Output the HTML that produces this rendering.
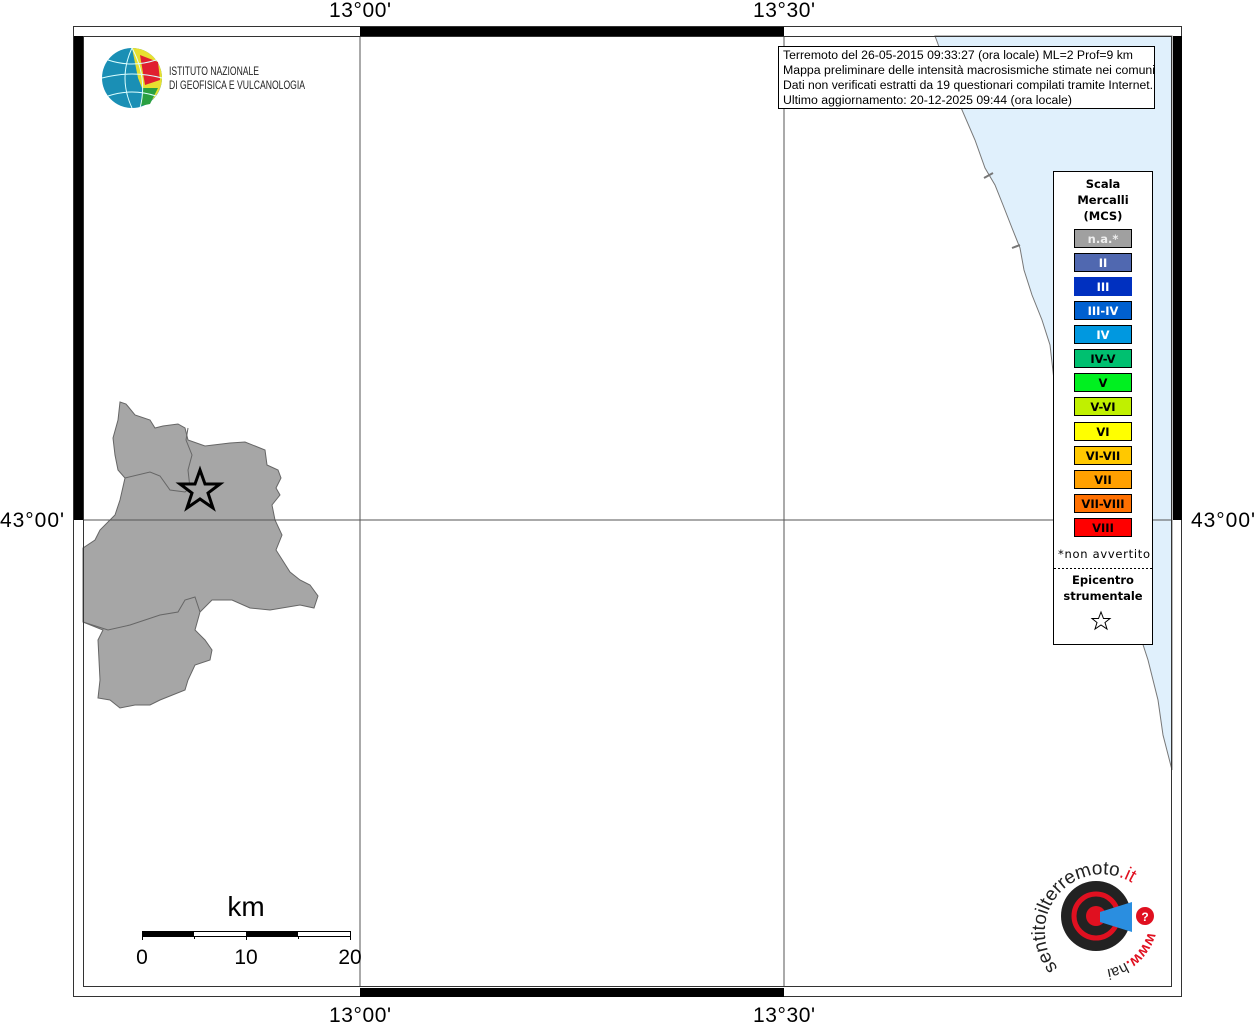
<!DOCTYPE html>
<html><head><meta charset="utf-8"><style>
html,body{margin:0;padding:0;background:#fff;width:1255px;height:1024px;overflow:hidden}
svg{display:block}
text{font-family:"Liberation Sans",sans-serif}
text.lg,.lg text{font-family:"DejaVu Sans",sans-serif;font-weight:bold;font-size:11.5px}
</style></head><body>
<svg width="1255" height="1024" viewBox="0 0 1255 1024" xmlns="http://www.w3.org/2000/svg">
<path d="M935,36 L955,90 L962,110 L975,140 L985,168 L995,185 L1003,205 L1012,228 L1020,248 L1024,270 L1032,295 L1042,320 L1050,345 L1054,380 L1060,420 L1075,470 L1090,510 L1110,560 L1135,620 L1148,660 L1158,700 L1163,735 L1172,770 L1172,36 Z" fill="#e0f0fc" stroke="#777" stroke-width="1"/>
<path d="M984,178 L993,173 M1012,248 L1020,245" stroke="#777" stroke-width="2" fill="none"/>
<path d="M120,402 L126,404 L135,415 L150,420 L155,428 L163,426 L178,424 L185,428 L188,440 L205,446 L230,443 L245,442 L265,450 L267,465 L278,470 L281,478 L276,488 L280,495 L272,505 L275,520 L282,535 L276,550 L290,572 L300,580 L310,585 L318,596 L314,608 L300,605 L270,610 L250,608 L232,600 L212,600 L200,612 L195,630 L205,640 L212,650 L210,660 L195,665 L188,680 L185,690 L160,700 L150,705 L135,705 L120,708 L110,700 L98,698 L100,680 L98,640 L103,630 L83,622 L83,548 L95,540 L100,530 L115,515 L120,500 L125,478 L118,470 L115,455 L113,438 L118,420 Z" fill="#a6a6a6" stroke="#666" stroke-width="1"/>
<path d="M125,478 L150,472 L160,476 L170,490 L185,492 L190,488 L188,470 L192,455 L186,440 L188,428 M83,622 L108,630 L130,625 L160,615 L178,612 L185,600 L195,597 L200,612" fill="none" stroke="#666" stroke-width="1"/>
<line x1="360" y1="36" x2="360" y2="987" stroke="#555" stroke-width="1"/>
<line x1="784" y1="36" x2="784" y2="987" stroke="#555" stroke-width="1"/>
<line x1="83" y1="520" x2="1172" y2="520" stroke="#555" stroke-width="1"/>
<rect x="73.5" y="26.5" width="1108" height="970" fill="none" stroke="#333" stroke-width="1"/>
<rect x="83.5" y="36.5" width="1088" height="950" fill="none" stroke="#333" stroke-width="1"/>
<rect x="360" y="27" width="424" height="9" fill="#000"/>
<rect x="360" y="988" width="424" height="9" fill="#000"/>
<rect x="74" y="36" width="9" height="484" fill="#000"/>
<rect x="1173" y="36" width="9" height="484" fill="#000"/>
<text x="360" y="17" font-size="21" text-anchor="middle" textLength="62">13°00'</text>
<text x="784" y="17" font-size="21" text-anchor="middle" textLength="62">13°30'</text>
<text x="360" y="1022" font-size="21" text-anchor="middle" textLength="62">13°00'</text>
<text x="784" y="1022" font-size="21" text-anchor="middle" textLength="62">13°30'</text>
<text x="0" y="527" font-size="21" textLength="64">43°00'</text>
<text x="1191" y="527" font-size="21" textLength="64">43°00'</text>
<polygon points="200,470 205,484 220,484 208,493 213,508 200,499 187,508 192,493 180,484 195,484" fill="#a6a6a6" stroke="#000" stroke-width="3"/>
<circle cx="132" cy="78" r="30" fill="#1a8fb5"/>
<path d="M132,48 A30,30 0 0 1 162,78 A30,30 0 0 1 148,103 L138,78 Z" fill="#e8e030"/>
<path d="M140,55 L158,62 L160,80 L145,85 Z" fill="#e02030"/>
<path d="M143,88 L158,88 L150,104 L140,106 Z" fill="#2aa040"/>
<path d="M102,78 Q132,70 162,78 M132,48 Q118,78 132,108 M132,48 Q148,78 140,108 M108,60 Q132,68 156,60 M108,96 Q132,88 156,96" stroke="#dff" stroke-width="1" fill="none"/>
<text x="169" y="75" font-size="12" fill="#222" textLength="90" lengthAdjust="spacingAndGlyphs">ISTITUTO NAZIONALE</text>
<text x="169" y="89" font-size="12" fill="#222" textLength="136" lengthAdjust="spacingAndGlyphs">DI GEOFISICA E VULCANOLOGIA</text>
<rect x="778.5" y="46.5" width="376" height="62" fill="#fff" stroke="#000"/>
<text font-size="11.5" x="783" y="59" textLength="350" lengthAdjust="spacingAndGlyphs">Terremoto del 26-05-2015 09:33:27 (ora locale) ML=2 Prof=9 km</text>
<text font-size="11.5" x="783" y="74" textLength="372" lengthAdjust="spacingAndGlyphs">Mappa preliminare delle intensità macrosismiche stimate nei comuni</text>
<text font-size="11.5" x="783" y="89" textLength="370" lengthAdjust="spacingAndGlyphs">Dati non verificati estratti da 19 questionari compilati tramite Internet.</text>
<text font-size="11.5" x="783" y="104" textLength="289" lengthAdjust="spacingAndGlyphs">Ultimo aggiornamento: 20-12-2025 09:44 (ora locale)</text>
<rect x="1053.5" y="171.5" width="99" height="473" fill="#fff" stroke="#000"/>
<text class="lg" x="1103" y="188" text-anchor="middle">Scala</text>
<text class="lg" x="1103" y="204" text-anchor="middle">Mercalli</text>
<text class="lg" x="1103" y="220" text-anchor="middle">(MCS)</text>
<g stroke="#000" stroke-width="1">
<rect x="1074.5" y="229.5" width="57" height="18" fill="#a0a0a0"/>
<rect x="1074.5" y="253.5" width="57" height="18" fill="#5068b0"/>
<rect x="1074.5" y="277.5" width="57" height="18" fill="#0030c0" stroke="#0030c0"/>
<rect x="1074.5" y="301.5" width="57" height="18" fill="#0060d0"/>
<rect x="1074.5" y="325.5" width="57" height="18" fill="#0098e0"/>
<rect x="1074.5" y="349.5" width="57" height="18" fill="#00c070"/>
<rect x="1074.5" y="373.5" width="57" height="18" fill="#00f020"/>
<rect x="1074.5" y="397.5" width="57" height="18" fill="#c0f000"/>
<rect x="1074.5" y="422.5" width="57" height="18" fill="#ffff00"/>
<rect x="1074.5" y="446.5" width="57" height="18" fill="#ffc800"/>
<rect x="1074.5" y="470.5" width="57" height="18" fill="#ffa000"/>
<rect x="1074.5" y="494.5" width="57" height="18" fill="#ff7000"/>
<rect x="1074.5" y="518.5" width="57" height="18" fill="#ff0000"/>
</g>
<g class="lg" text-anchor="middle">
<text x="1103" y="243" fill="#eee">n.a.*</text>
<text x="1103" y="267" fill="#fff">II</text>
<text x="1103" y="291" fill="#fff">III</text>
<text x="1103" y="315" fill="#fff">III-IV</text>
<text x="1103" y="339" fill="#fff">IV</text>
<text x="1103" y="363">IV-V</text>
<text x="1103" y="387">V</text>
<text x="1103" y="411">V-VI</text>
<text x="1103" y="436">VI</text>
<text x="1103" y="460">VI-VII</text>
<text x="1103" y="484">VII</text>
<text x="1103" y="508">VII-VIII</text>
<text x="1103" y="532">VIII</text>
</g>
<text x="1104" y="558" font-size="11.5" text-anchor="middle" style="font-family:'DejaVu Sans',sans-serif" textLength="92">*non avvertito</text>
<line x1="1054" y1="568.5" x2="1152" y2="568.5" stroke="#000" stroke-dasharray="2,2"/>
<text class="lg" x="1103" y="584" text-anchor="middle">Epicentro</text>
<text class="lg" x="1103" y="600" text-anchor="middle">strumentale</text>
<polygon points="1101,612 1103.5,618.5 1110,618.5 1105,622.5 1107,629 1101,625 1095,629 1097,622.5 1092,618.5 1098.5,618.5" fill="none" stroke="#000" stroke-width="1"/>
<text x="246" y="916" font-size="28" text-anchor="middle">km</text>
<rect x="142.5" y="931.5" width="208" height="5" fill="#fff" stroke="#000"/>
<rect x="142" y="931" width="52" height="6" fill="#000"/>
<rect x="246" y="931" width="52" height="6" fill="#000"/>
<path d="M142.5,931 V940 M194.5,936 V939 M246.5,931 V940 M298.5,936 V939 M350.5,931 V940" stroke="#000"/>
<text x="142" y="964" font-size="21" text-anchor="middle">0</text>
<text x="246" y="964" font-size="21" text-anchor="middle">10</text>
<text x="350" y="964" font-size="21" text-anchor="middle">20</text>
<circle cx="1096" cy="916" r="35" fill="#222"/>
<circle cx="1096" cy="916" r="22" fill="none" stroke="#e01020" stroke-width="5"/>
<circle cx="1096" cy="916" r="10" fill="#e01020"/>
<path d="M1100,912 L1132,902 L1132,932 L1100,922 Z" fill="#2a8ee0"/>
<circle cx="1145" cy="916" r="9" fill="#e01020"/>
<text x="1145" y="921" font-size="12" fill="#fff" text-anchor="middle" font-weight="bold">?</text>
<path id="arc" d="M1058,968 A50,50 0 1 1 1146,895" fill="none"/>
<text font-size="19" fill="#222"><textPath href="#arc">sentitoilterremoto<tspan fill="#e01020">.it</tspan></textPath></text>
<path id="arc2" d="M1148,932 A52,52 0 0 1 1095,970" fill="none"/>
<text font-size="15" font-weight="bold" fill="#e01020"><textPath href="#arc2">www.<tspan fill="#222" font-weight="normal">hai</tspan></textPath></text>
</svg>
</body></html>
